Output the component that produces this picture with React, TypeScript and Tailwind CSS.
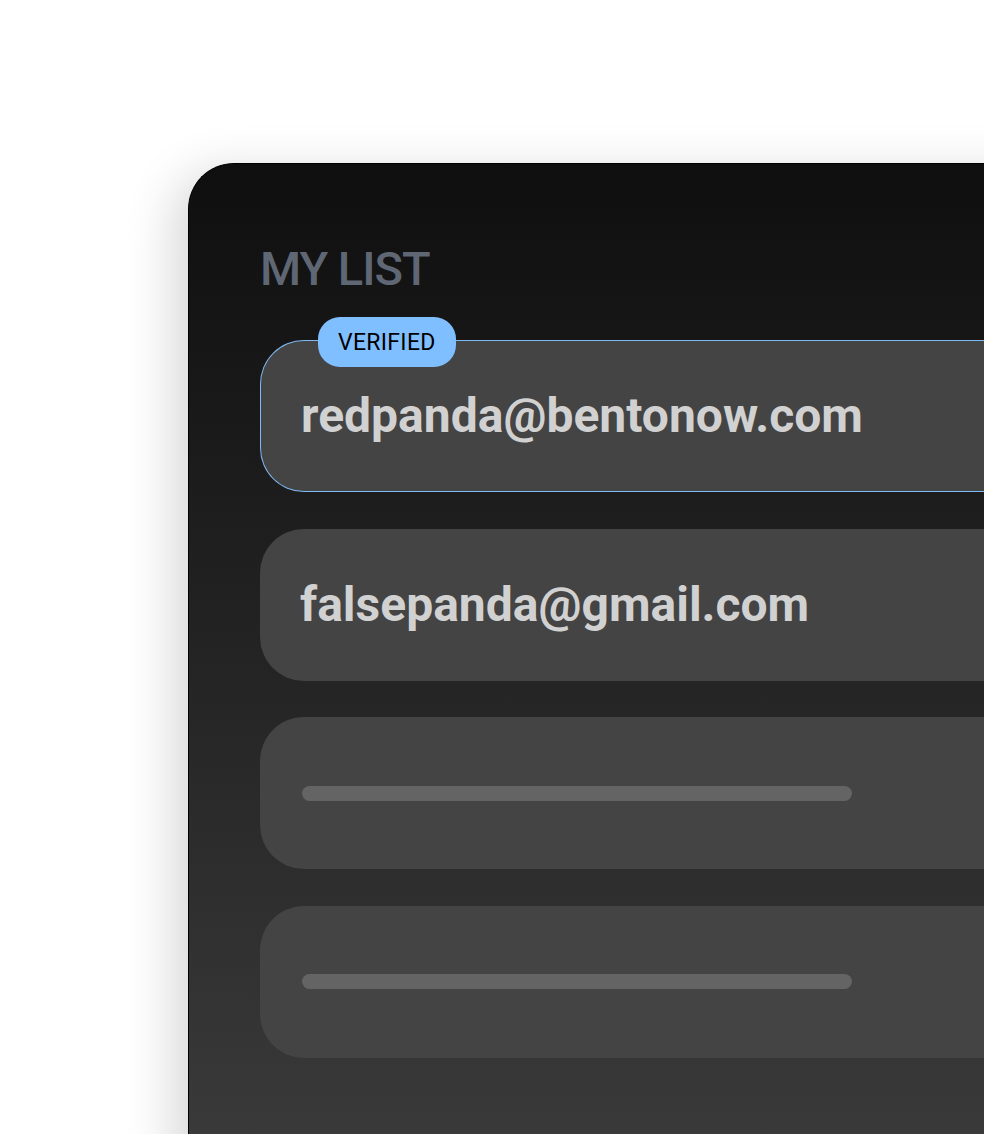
import React from 'react';

interface ListRowProps {
  email?: string;
  verified?: boolean;
}

function ListRow({ email, verified }: ListRowProps) {
  return (
    <div
      className={
        'relative flex h-[152px] w-full shrink-0 items-center rounded-l-[44px] bg-[#444444] pl-[40px] ' +
        (verified ? 'border border-r-0 border-[#7fb9f2]' : '')
      }
    >
      {verified && (
        <span className="absolute left-[57px] top-[-24px] flex h-[50px] items-center rounded-[22px] bg-[#80bfff] px-[20px] text-[23px] leading-none tracking-[0.3px] text-black">
          VERIFIED
        </span>
      )}
      {email ? (
        <span className="text-[48px] font-bold leading-none text-[#d1d1d1]">{email}</span>
      ) : (
        <div className="ml-[2px] h-[15px] w-[550px] rounded-full bg-[#646464]" />
      )}
    </div>
  );
}

export default function App() {
  return (
    <div
      className="h-[1134px] w-full overflow-hidden bg-white pl-[188px] pt-[163px]"
      style={{ fontFamily: 'Roboto, "Liberation Sans", sans-serif' }}
    >
      <div className="flex h-[1000px] w-[900px] flex-col rounded-tl-[46px] border-l border-t border-black bg-gradient-to-b from-[#0f0f0f] to-[#3b3b3b] pl-[71px] pt-[81px] shadow-[-14px_10px_50px_rgba(0,0,0,0.16)]">
        <h1 className="text-[47px] font-medium leading-none tracking-[-1px] text-[#5f6775]">MY LIST</h1>
        <div className="mt-[48px] flex flex-col gap-[36.5px]">
          <ListRow email="redpanda@bentonow.com" verified />
          <ListRow email="falsepanda@gmail.com" />
          <ListRow />
          <ListRow />
        </div>
      </div>
    </div>
  );
}
